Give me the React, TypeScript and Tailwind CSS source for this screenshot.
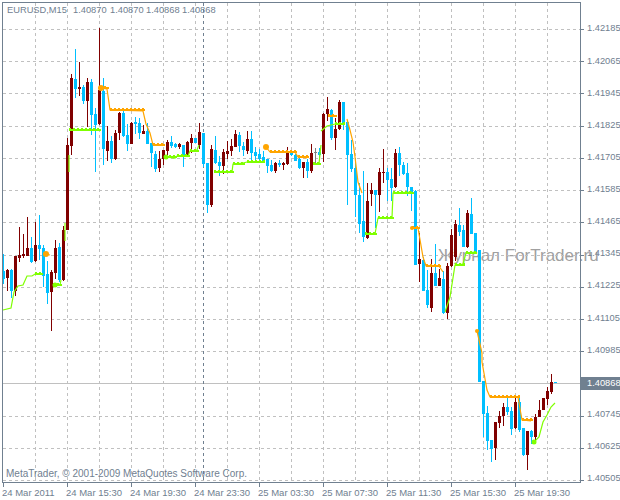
import React from "react";

type Bar = [number, "d" | "c" | "g", number, number, number, number];
// [column, colour, wickTop, wickBottom, bodyTop, bodyBottom]
const bars: Bar[] = [
  [3,"c",254,284,271,279],[7,"d",269,291,270,278],[11,"c",269,298,270,291],[15,"d",256,296,256,291],
  [19,"d",227,262,255,258],[23,"d",234,258,254,256],[27,"d",217,256,248,256],[31,"c",237,263,248,262],
  [35,"d",222,262,245,261],[39,"c",215,260,245,249],[43,"c",245,287,248,276],[47,"c",261,304,274,293],
  [51,"d",270,331,272,292],[55,"d",240,279,248,273],[59,"c",243,282,247,280],[63,"d",226,281,230,280],
  [67,"d",138,230,145,230],[71,"d",74,155,78,146],[75,"c",49,98,79,89],[79,"d",62,96,87,89],
  [83,"c",85,104,87,101],[87,"d",78,127,82,101],[91,"c",79,135,82,115],[95,"c",108,172,114,125],
  [99,"d",28,125,90,124],[103,"c",78,165,91,149],[107,"d",126,161,141,151],[111,"c",136,163,141,159],
  [115,"d",130,160,133,159],[119,"d",112,140,113,133],[123,"c",110,137,113,136],[127,"c",124,151,135,144],
  [131,"d",122,144,123,144],[135,"c",117,134,122,124],[139,"c",118,139,123,133],[143,"d",125,134,131,134],
  [147,"c",123,144,131,144],[151,"c",143,167,143,153],[155,"c",151,172,154,169],[159,"d",151,172,159,168],
  [163,"d",150,165,150,159],[167,"d",140,155,142,151],[171,"c",136,148,142,146],[175,"c",143,148,144,147],
  [179,"d",143,149,144,147],[183,"c",145,167,145,156],[187,"d",141,156,142,155],[191,"d",134,153,138,143],
  [195,"c",138,143,138,143],[199,"d",123,149,132,145],[203,"c",133,167,133,164],[207,"c",163,213,163,205],
  [211,"d",145,207,149,205],[215,"c",136,164,150,163],[219,"c",156,176,162,166],[223,"d",149,174,152,166],
  [227,"d",141,159,151,154],[231,"d",139,156,146,151],[235,"d",130,147,134,147],[239,"c",132,152,135,146],
  [243,"c",142,156,146,150],[247,"d",131,154,139,151],[251,"c",131,160,139,153],[255,"c",147,160,152,156],
  [259,"c",149,163,154,159],[263,"c",151,162,157,161],[267,"c",159,173,159,166],[271,"c",160,172,165,171],
  [275,"d",162,173,163,171],[279,"c",160,167,163,165],[283,"d",162,170,163,165],[287,"d",147,165,153,164],
  [291,"c",152,156,153,155],[295,"c",154,161,155,161],[299,"c",155,169,159,168],[303,"d",162,178,162,168],
  [307,"c",159,178,162,171],[311,"d",144,173,153,171],[315,"g",148,164,152,153],[319,"c",148,160,152,155],
  [323,"d",113,162,114,154],[327,"d",97,121,109,114],[331,"c",109,140,110,138],[335,"d",118,150,129,138],
  [339,"d",100,130,102,129],[343,"c",102,130,102,123],[347,"c",120,205,122,155],[351,"c",140,172,154,169],
  [355,"c",158,217,168,195],[359,"c",183,233,195,224],[363,"c",171,242,221,237],[367,"d",183,239,201,238],
  [371,"d",183,206,190,194],[375,"c",190,228,190,195],[379,"d",168,212,172,195],[383,"d",149,183,172,173],
  [387,"c",168,201,172,180],[391,"c",168,201,179,188],[395,"d",149,188,153,187],[399,"c",147,176,153,165],
  [403,"c",162,175,165,174],[407,"c",163,196,173,187],[411,"c",187,211,187,192],[415,"c",190,265,191,265],
  [419,"d",233,282,259,264],[423,"c",257,291,260,291],[427,"c",270,308,290,305],[431,"d",259,312,273,308],
  [435,"c",244,286,273,286],[439,"d",269,286,278,286],[443,"c",271,314,279,313],[447,"d",263,319,266,313],
  [451,"d",229,267,235,266],[455,"d",220,261,224,257],[459,"c",208,236,225,232],[463,"c",225,247,230,247],
  [467,"d",210,248,213,247],[471,"c",198,234,214,234],[475,"c",233,252,233,252],[479,"c",250,382,250,382],
  [483,"c",381,437,381,414],[487,"c",406,450,413,441],[491,"c",440,462,440,449],[495,"d",422,460,422,448],
  [499,"d",411,428,416,423],[503,"d",403,426,407,416],[507,"c",396,415,407,412],[511,"c",407,435,411,429],
  [515,"d",397,429,402,428],[519,"c",395,432,402,430],[523,"c",428,456,428,455],[527,"d",431,470,431,455],
  [531,"c",430,444,431,437],[535,"d",414,442,417,437],[539,"d",400,417,410,417],[543,"d",398,410,398,410],
  [547,"d",387,405,391,399],[551,"d",374,394,382,392],[555,"c",382,383,382,383],
];

const colour = { d: "#800000", c: "#00BFFF", g: "#808080" };

const gridY = [29, 61, 93, 126, 158, 190, 222, 255, 287, 319, 351, 416, 448, 480];
const gridX = [35, 67, 99, 131, 163, 195, 227, 259, 291, 323, 355, 387, 419, 451, 483, 515, 547];
const timeTicks = [3, 67, 131, 195, 259, 323, 387, 451, 515];
const prices = ["1.42185","1.42065","1.41945","1.41825","1.41705","1.41585","1.41465","1.41345","1.41225","1.41105","1.40985","","1.40745","1.40625","1.40505"];
const times = ["24 Mar 2011","24 Mar 15:30","24 Mar 19:30","24 Mar 23:30","25 Mar 03:30","25 Mar 07:30","25 Mar 11:30","25 Mar 15:30","25 Mar 19:30"];

const orange: number[][][] = [
  [[100,88],[107,89],[110,110],[143,111],[146,124],[150,133],[153,145],[163,145]],
  [[266,147],[270,152],[295,152],[298,157],[307,158]],
  [[328,116],[335,116]],
  [[347,119],[350,130],[353,142],[355,157],[358,182],[362,193]],
  [[412,228],[418,228],[423,257],[426,266],[439,266],[443,272]],
  [[477,331],[482,353],[482,362],[487,390],[490,397],[518,397],[522,420],[531,421]],
  [[45,254],[50,255]],
];
const lime: number[][][] = [
  [[3,310],[11,308],[14,292],[18,286],[23,285],[27,276],[32,276],[35,274],[41,274]],
  [[53,285],[60,285],[61,280]],
  [[65,241],[65,223]],
  [[69,172],[69,155]],
  [[69,130],[99,130]],
  [[165,157],[175,158],[177,156],[188,156],[190,151],[197,150],[199,145]],
  [[214,172],[232,172],[233,164],[243,163],[247,162],[263,162]],
  [[313,164],[319,164],[321,145]],
  [[321,131],[327,126],[335,124],[343,124]],
  [[365,234],[375,234],[378,218],[392,218],[393,193],[412,192]],
  [[445,312],[450,297],[455,265],[463,264],[466,253],[475,252]],
  [[534,442],[539,437],[543,422],[547,415],[551,407],[555,403]],
];
const flats = (lines: number[][][]) =>
  lines.flatMap((l) =>
    l.slice(1).flatMap((p, i) => {
      const a = l[i];
      return Math.abs(p[1] - a[1]) > 1 || p[0] - a[0] < 6 ? [] : [[a[0], p[0], a[1]]];
    })
  );
const bumps = (lines: number[][][]) =>
  flats(lines).flatMap(([from, to, y]) => {
    const out: number[][] = [];
    for (let x = from; x <= to; x += 4) out.push([x, y]);
    return out;
  });

function Step({ lines, color }: { lines: number[][][]; color: string }) {
  return (
    <g>
      {lines.map((l, i) => (
        <polyline key={i} points={l.map((p) => p.join(",")).join(" ")} fill="none" stroke={color} strokeWidth="1.2" shapeRendering="auto" />
      ))}
      {flats(lines).map(([from, to, y], i) => (
        <rect key={i} x={from} y={y - 1} width={to - from + 2} height="2" fill={color} />
      ))}
      {bumps(lines).map(([x, y], i) => (
        <rect key={i} x={x} y={y - 2} width="2" height="1" fill={color} />
      ))}
    </g>
  );
}

export default function App() {
  return (
    <div className="relative w-[620px] h-[500px] overflow-hidden bg-white flex flex-col text-[#708090] text-[9.3px] leading-none [font-family:'Liberation_Sans',sans-serif]">
      <div className="absolute left-[438px] top-[246px] text-[17px] leading-[20px] text-[#a0a0a0] whitespace-nowrap">
        Журнал ForTrader.ru
      </div>
      <div className="relative z-10 flex h-[487px]">
        <svg width="585" height="487" className="block shrink-0" shapeRendering="crispEdges">
          {gridY.map((y) => (
            <line key={y} x1="3" x2="580" y1={y + 0.5} y2={y + 0.5} stroke="#C0C0C0" strokeDasharray="3 3" />
          ))}
          {gridX.map((x) => (
            <line key={x} x1={x + 0.5} x2={x + 0.5} y1="3" y2="482" stroke="#C0C0C0" strokeDasharray="3 3" />
          ))}
          <line x1="3" x2="581" y1="383.5" y2="383.5" stroke="#C0C0C0" />
          <line x1="203.5" x2="203.5" y1="3" y2="482" stroke="#708090" strokeDasharray="3 3" />
          {bars.map(([x, c, wt, wb, bt, bb]) => (
            <g key={x} fill={colour[c]}>
              <rect x={x} y={wt} width="1" height={Math.max(wb - wt, 1)} />
              <rect x={x - 1} y={bt} width="3" height={Math.max(bb - bt, 1)} />
            </g>
          ))}
          <Step lines={orange} color="#FFA500" />
          <circle cx="101" cy="88" r="3" fill="#FFA500" shapeRendering="auto" />
          <circle cx="46" cy="254" r="3" fill="#FFA500" shapeRendering="auto" />
          <circle cx="266" cy="147" r="3" fill="#FFA500" shapeRendering="auto" />
          <circle cx="412" cy="228" r="2" fill="#FFA500" shapeRendering="auto" />
          <circle cx="477" cy="331" r="2" fill="#FFA500" shapeRendering="auto" />
          <Step lines={lime} color="#7FFF00" />
          <circle cx="55" cy="285" r="2.5" fill="#7FFF00" shapeRendering="auto" />
          <circle cx="166" cy="157" r="2.5" fill="#7FFF00" shapeRendering="auto" />
          <circle cx="534" cy="442" r="2.5" fill="#7FFF00" shapeRendering="auto" />
          <rect x="2" y="2" width="578" height="480" fill="none" stroke="#708090" transform="translate(0.5 0.5)" />
          {[...gridY, 383].map((y) => (
            <line key={y} x1="581" x2="584" y1={y + 0.5} y2={y + 0.5} stroke="#708090" />
          ))}
          {timeTicks.map((x) => (
            <line key={x} x1={x + 0.5} x2={x + 0.5} y1="483" y2="487" stroke="#708090" />
          ))}
        </svg>
        <div className="flex flex-col pt-[13px] w-[35px] pl-[2px]">
          {prices.map((p, i) => (
            <div key={i} className="h-[32.14px] shrink-0 flex items-center whitespace-nowrap">
              {p}
            </div>
          ))}
        </div>
      </div>
      <div className="relative z-10 flex pl-[2px] text-[9.5px]">
        {times.map((t) => (
          <div key={t} className="w-16 shrink-0 pt-[1px] whitespace-nowrap">
            {t}
          </div>
        ))}
      </div>
      <div className="absolute z-20 left-[7px] top-[6px] flex whitespace-nowrap">
        <span className="w-[66px]">EURUSD,M15</span>
        <span className="w-[37px]">1.40870</span>
        <span className="w-[36px]">1.40870</span>
        <span className="w-[36px]">1.40868</span>
        <span className="w-[36px]">1.40868</span>
      </div>
      <div className="absolute z-20 left-[6px] top-[469px] text-[10px] whitespace-nowrap">
        MetaTrader, © 2001-2009 MetaQuotes Software Corp.
      </div>
      <div className="absolute z-20 left-[581px] top-[377px] w-[39px] h-[13px] bg-[#708090] text-white flex items-center pl-[6px]">
        1.40868
      </div>
    </div>
  );
}
